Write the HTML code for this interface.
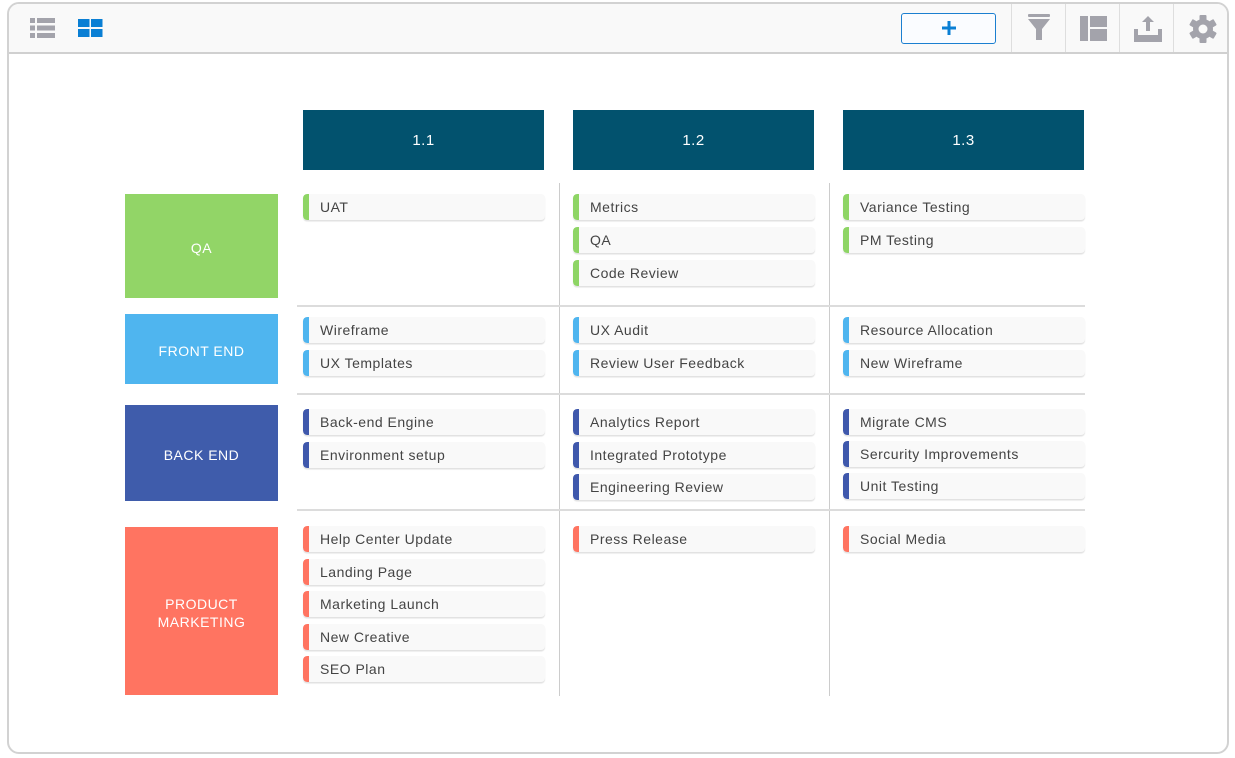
<!DOCTYPE html>
<html><head><meta charset="utf-8"><style>
*{box-sizing:border-box;margin:0;padding:0}
body{width:1235px;height:758px;background:#fff;position:relative;overflow:hidden;font-family:"Liberation Sans",sans-serif}
.frame{position:absolute;left:7px;top:2px;width:1222px;height:752px;border:2px solid #d2d2d2;border-radius:12px;overflow:hidden;background:#fff}
.tb{position:absolute;left:0;top:0;width:100%;height:50px;background:#f9f9f9;border-bottom:2px solid #d0d0d0}
.a{position:absolute}
.div{position:absolute;top:0;width:1px;height:48px;background:#dedede}
.hd{position:absolute;top:110px;width:241px;height:60px;background:#02526e;color:#fff;font-size:15px;display:flex;align-items:center;justify-content:center;letter-spacing:0.5px}
.lab{position:absolute;left:125px;width:153px;color:#fff;font-size:14px;letter-spacing:0.5px;display:flex;align-items:center;justify-content:center;text-align:center;line-height:18px;padding-top:4px}
.vl{position:absolute;top:183px;width:1px;height:513px;background:#ccc}
.hl{position:absolute;left:297px;width:788px;height:2px;background:#dcdcdc}
.c{position:absolute;width:242px;height:26px;background:#f9f9f9;border-radius:4px;box-shadow:0 1.5px 1px #e2e2e2;font-size:14px;letter-spacing:0.5px;color:#444;line-height:26px;padding-left:17px;overflow:hidden;white-space:nowrap}
.c:before{content:"";position:absolute;left:0;top:0;width:6px;height:26px;border-radius:4px 0 0 4px;background:var(--k)}
.g{--k:#8ed565}.b{--k:#4fb5ef}.d{--k:#3f58ac}.r{--k:#ff7461}
</style></head><body>
<div class="frame">
<div class="tb">
<svg class="a" style="left:21px;top:12px" width="26" height="24" viewBox="0 0 26 24" fill="#a3a3ab"><rect x="0" y="2" width="5" height="5"/><rect x="7" y="2" width="18" height="5"/><rect x="0" y="9.5" width="5" height="5"/><rect x="7" y="9.5" width="18" height="5"/><rect x="0" y="17" width="5" height="5"/><rect x="7" y="17" width="18" height="5"/></svg>
<svg class="a" style="left:69px;top:15px" width="26" height="20" viewBox="0 0 26 20" fill="#0a7fd4"><rect x="0" y="0" width="11.5" height="8"/><rect x="13" y="0" width="11.5" height="8"/><rect x="0" y="10" width="11.5" height="8"/><rect x="13" y="10" width="11.5" height="8"/></svg>
<div class="a" style="left:892px;top:9px;width:95px;height:31px;border:1.5px solid #1b7fd0;border-radius:3px;background:#fafcff"></div>
<svg class="a" style="left:932px;top:16px" width="16" height="16" viewBox="0 0 16 16" fill="#0a7fd4"><rect x="6.5" y="1" width="3" height="14"/><rect x="1" y="6.5" width="14" height="3"/></svg>
<div class="div" style="left:1002px"></div><div class="div" style="left:1056px"></div><div class="div" style="left:1110px"></div><div class="div" style="left:1164px"></div>
<svg class="a" style="left:1019px;top:10px" width="22" height="28" viewBox="0 0 22 28" fill="#a3a3ab"><rect x="0" y="0" width="22" height="3" rx="1"/><path d="M0 5H22L14 15V26H8V15Z"/></svg>
<svg class="a" style="left:1071px;top:12px" width="27" height="25" viewBox="0 0 27 25" fill="#a3a3ab"><rect x="0" y="0" width="8" height="25"/><rect x="10" y="0" width="17" height="11"/><rect x="10" y="13" width="17" height="12"/></svg>
<svg class="a" style="left:1125px;top:12px" width="28" height="26" viewBox="0 0 28 26" fill="#a3a3ab"><path d="M14 0L20 6H16V15H12V6H8Z"/><path d="M0 13H4V19H24V13H28V26H0Z"/></svg>
<svg class="a" style="left:1179px;top:10px" width="30" height="30" viewBox="0 0 30 30"><g fill="#a3a3ab" transform="translate(15 15)"><circle r="10"/><rect x="-3.5" y="-14" width="7" height="28" rx="1"/><rect x="-3.5" y="-14" width="7" height="28" rx="1" transform="rotate(60)"/><rect x="-3.5" y="-14" width="7" height="28" rx="1" transform="rotate(120)"/></g><circle cx="15" cy="15" r="4.5" fill="#f9f9f9"/></svg>
</div>
</div>
<div class="hd" style="left:303px">1.1</div><div class="hd" style="left:573px">1.2</div><div class="hd" style="left:843px">1.3</div>
<div class="lab" style="top:194px;height:104px;background:#92d567">QA</div>
<div class="lab" style="top:314px;height:70px;background:#4fb5ef">FRONT END</div>
<div class="lab" style="top:405px;height:96px;background:#3f5cab">BACK END</div>
<div class="lab" style="top:527px;height:168px;background:#ff7461">PRODUCT<br>MARKETING</div>
<div class="vl" style="left:559px"></div><div class="vl" style="left:829px"></div>
<div class="hl" style="top:305px"></div><div class="hl" style="top:393px"></div><div class="hl" style="top:509px"></div>

<div class="c g" style="left:303px;top:194px">UAT</div>
<div class="c g" style="left:573px;top:194px">Metrics</div>
<div class="c g" style="left:573px;top:227px">QA</div>
<div class="c g" style="left:573px;top:260px">Code Review</div>
<div class="c g" style="left:843px;top:194px">Variance Testing</div>
<div class="c g" style="left:843px;top:227px">PM Testing</div>

<div class="c b" style="left:303px;top:317px">Wireframe</div>
<div class="c b" style="left:303px;top:350px">UX Templates</div>
<div class="c b" style="left:573px;top:317px">UX Audit</div>
<div class="c b" style="left:573px;top:350px">Review User Feedback</div>
<div class="c b" style="left:843px;top:317px">Resource Allocation</div>
<div class="c b" style="left:843px;top:350px">New Wireframe</div>

<div class="c d" style="left:303px;top:409px">Back-end Engine</div>
<div class="c d" style="left:303px;top:442px">Environment setup</div>
<div class="c d" style="left:573px;top:409px">Analytics Report</div>
<div class="c d" style="left:573px;top:442px">Integrated Prototype</div>
<div class="c d" style="left:573px;top:474px">Engineering Review</div>
<div class="c d" style="left:843px;top:409px">Migrate CMS</div>
<div class="c d" style="left:843px;top:441px">Sercurity Improvements</div>
<div class="c d" style="left:843px;top:473px">Unit Testing</div>

<div class="c r" style="left:303px;top:526px">Help Center Update</div>
<div class="c r" style="left:303px;top:559px">Landing Page</div>
<div class="c r" style="left:303px;top:591px">Marketing Launch</div>
<div class="c r" style="left:303px;top:624px">New Creative</div>
<div class="c r" style="left:303px;top:656px">SEO Plan</div>
<div class="c r" style="left:573px;top:526px">Press Release</div>
<div class="c r" style="left:843px;top:526px">Social Media</div>
</body></html>
